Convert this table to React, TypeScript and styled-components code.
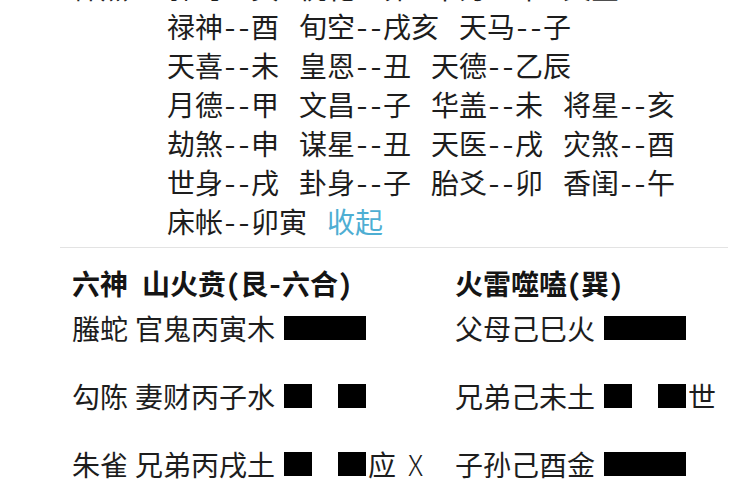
import React from "react";
import styled, { createGlobalStyle } from "styled-components";

const Global = createGlobalStyle`
  html, body { margin: 0; padding: 0; background: #fff; overflow: hidden; }
  body {
    font-family: "Noto Sans CJK SC", "Noto Sans", sans-serif;
    color: #1d1d1d;
  }
`;

const Page = styled.div`
  width: 750px;
  height: 500px;
  overflow: hidden;
  background: #fff;
`;

const Shensha = styled.section`
  display: grid;
  grid-template-columns: 95px 1fr;
  padding-left: 72px;
  margin-top: -32.5px;
  font-size: 28px;
  line-height: 39px;
  font-feature-settings: "hwid";
`;

const Label = styled.div`
  color: #2a2a2a;
`;

const Lines = styled.div`
  display: flex;
  flex-direction: column;
`;

const Line = styled.div`
  display: flex;
  gap: 20px;
  white-space: nowrap;
`;

const Collapse = styled.span`
  color: #4eaed3;
  cursor: pointer;
`;

const Divider = styled.hr`
  border: 0;
  height: 1px;
  background: #e3e3e3;
  margin: 6.5px 22px 0 60px;
`;

const Hexagrams = styled.section`
  display: grid;
  grid-template-columns: 383px 1fr;
  padding-left: 72px;
  margin-top: 15.5px;
  font-size: 28px;
`;

const Column = styled.div`
  display: flex;
  flex-direction: column;
`;

const Header = styled.div`
  font-weight: 700;
  line-height: 39px;
  height: 39px;
  white-space: nowrap;
  font-feature-settings: "hwid";
  color: #151515;
`;

const Rows = styled.div`
  display: flex;
  flex-direction: column;
  gap: 28px;
  margin-top: 5.5px;
`;

const YaoRow = styled.div`
  display: flex;
  align-items: center;
  height: 40px;
  white-space: nowrap;
`;

const Spirit = styled.span`
  width: 63px;
  flex: none;
`;

const YaoText = styled.span`
  width: 140px;
  flex: none;
`;

const Bar = styled.span<{ $yin: boolean }>`
  display: flex;
  justify-content: space-between;
  width: 82px;
  height: 24px;
  margin-left: 9px;
  flex: none;
  &::before, &::after {
    content: "";
    display: block;
    height: 100%;
    width: ${(p) => (p.$yin ? "28px" : "41px")};
    background: #000;
  }
`;

const Marker = styled.span`
  margin-left: 2px;
`;

const Change = styled.span`
  margin-left: 12px;
  font-weight: 300;
`;

type Yao = { spirit?: string; text: string; yin: boolean; mark?: string; change?: string };

const shensha: string[][] = [
  ["驿马--寅", "桃花--卯", "羊刃--午", "文星--"],
  ["禄神--酉", "旬空--戌亥", "天马--子"],
  ["天喜--未", "皇恩--丑", "天德--乙辰"],
  ["月德--甲", "文昌--子", "华盖--未", "将星--亥"],
  ["劫煞--申", "谋星--丑", "天医--戌", "灾煞--酉"],
  ["世身--戌", "卦身--子", "胎爻--卯", "香闺--午"],
  ["床帐--卯寅"],
];

const main: Yao[] = [
  { spirit: "螣蛇", text: "官鬼丙寅木", yin: false },
  { spirit: "勾陈", text: "妻财丙子水", yin: true },
  { spirit: "朱雀", text: "兄弟丙戌土", yin: true, mark: "应", change: "X" },
];

const changed: Yao[] = [
  { text: "父母己巳火", yin: false },
  { text: "兄弟己未土", yin: true, mark: "世" },
  { text: "子孙己酉金", yin: false },
];

function YaoLine({ yao }: { yao: Yao }) {
  return (
    <YaoRow>
      {yao.spirit && <Spirit>{yao.spirit}</Spirit>}
      <YaoText>{yao.text}</YaoText>
      <Bar $yin={yao.yin} />
      {yao.mark && <Marker>{yao.mark}</Marker>}
      {yao.change && <Change>{yao.change}</Change>}
    </YaoRow>
  );
}

export default function App() {
  return (
    <Page>
      <Global />
      <Shensha>
        <Label>神煞</Label>
        <Lines>
          {shensha.map((row, i) => (
            <Line key={i}>
              {row.map((item) => (
                <span key={item}>{item}</span>
              ))}
              {i === shensha.length - 1 && <Collapse>收起</Collapse>}
            </Line>
          ))}
        </Lines>
      </Shensha>
      <Divider />
      <Hexagrams>
        <Column>
          <Header>六神 山火贲(艮-六合)</Header>
          <Rows>
            {main.map((y) => (
              <YaoLine key={y.text} yao={y} />
            ))}
          </Rows>
        </Column>
        <Column>
          <Header>火雷噬嗑(巽)</Header>
          <Rows>
            {changed.map((y) => (
              <YaoLine key={y.text} yao={y} />
            ))}
          </Rows>
        </Column>
      </Hexagrams>
    </Page>
  );
}
